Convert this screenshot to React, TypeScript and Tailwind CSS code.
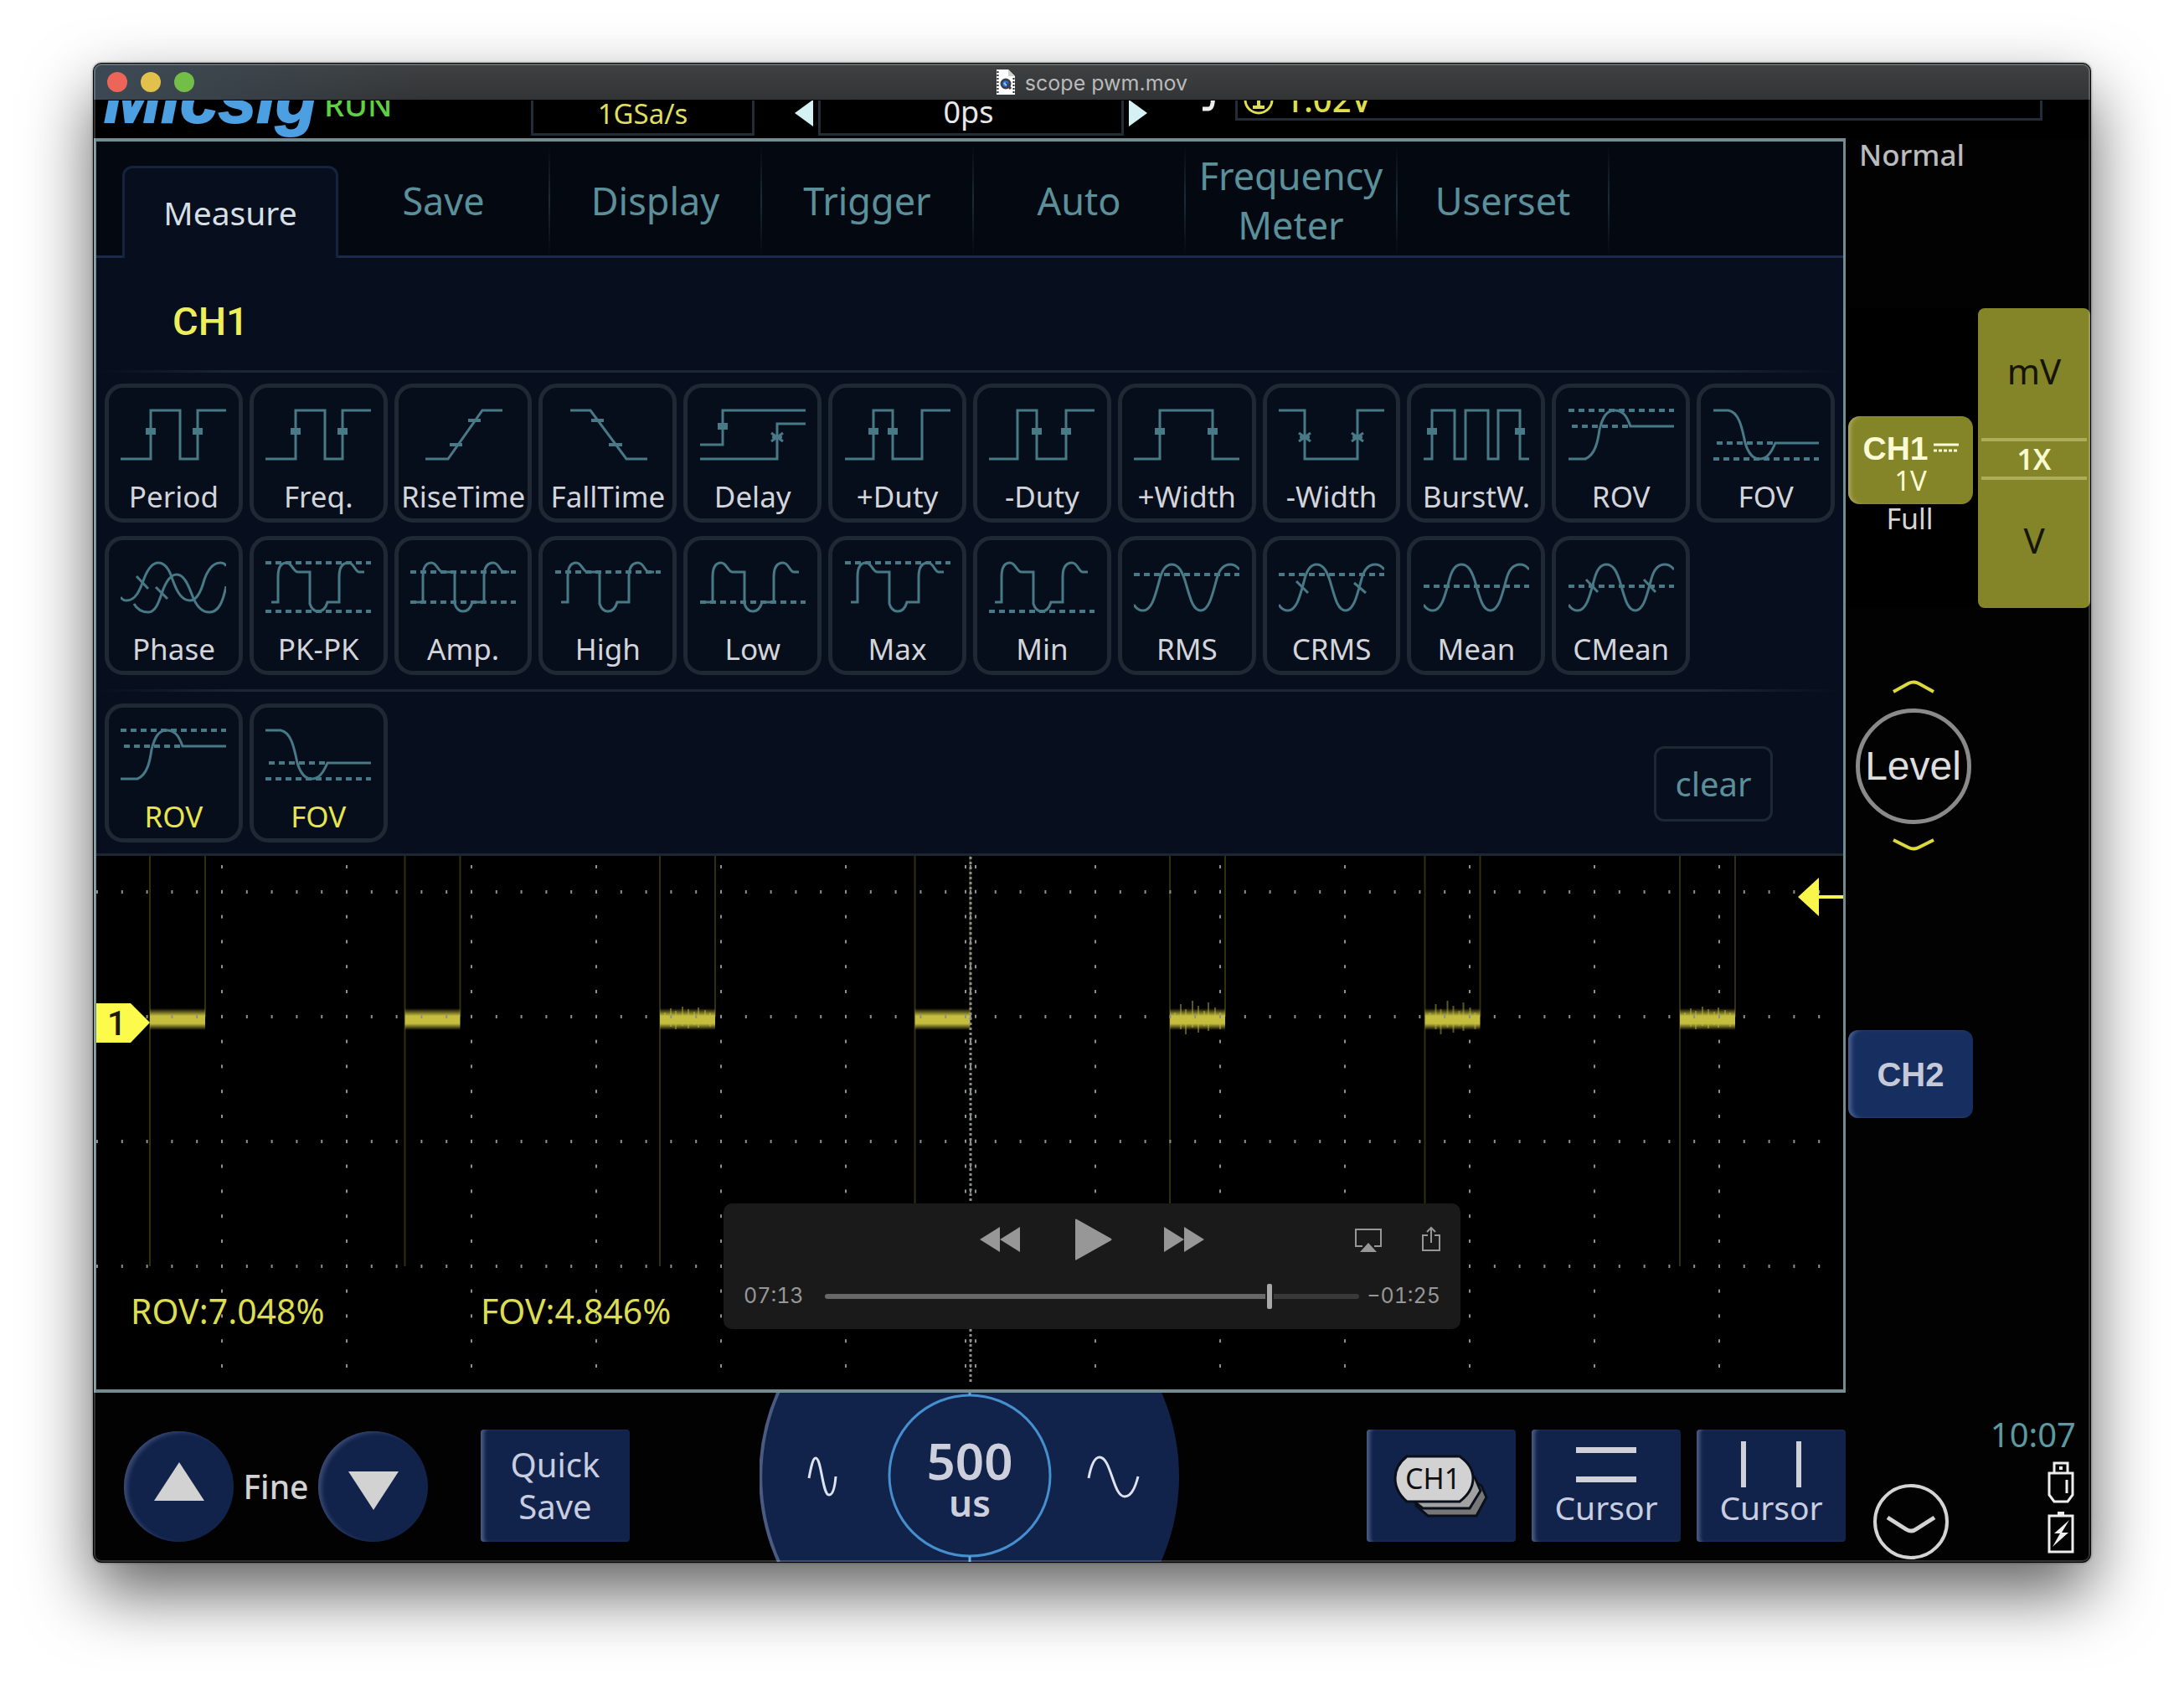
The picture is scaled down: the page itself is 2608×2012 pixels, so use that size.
import type { ReactNode } from "react";

const PULSE =
  "M7 50H15V20C15 8 19 3 25 3C32 3 33 14 39 14H53V52C55 58 58 61 63 61C68 61 72 57 74 50H88V20C88 8 92 3 99 3C106 3 107 14 112 14H118";
const SINE =
  "M0 53C3 58 7 60 11 60C22 60 26 40 31 22C34 11 38 5 45 5C53 5 57 12 61 24C67 44 70 60 80 60C90 60 94 40 99 22C102 11 107 5 115 5C120 5 123 7 126 11";

type Mark = [number, number];

function Plus({ at, cross }: { at: Mark[]; cross?: boolean }) {
  return (
    <>
      {at.map(([x, y]) => (
        <path
          key={x}
          strokeWidth={cross ? 3 : 8}
          d={
            cross
              ? `M${x - 7} ${y - 5}L${x + 7} ${y + 5}M${x - 7} ${y + 5}L${x + 7} ${y - 5}M${x - 6} ${y}H${x + 6}`
              : `M${x - 6} ${y}H${x + 6}`
          }
        />
      ))}
    </>
  );
}

function Dash({ y, from = 0, to = 126 }: { y: number; from?: number; to?: number }) {
  return <path strokeDasharray="7 5" strokeWidth="4" d={`M${from} ${y}H${to}`} />;
}

const ICONS: Record<string, ReactNode> = {
  Period: (
    <>
      <path d="M0 61H36V3H71V61H92V3H126" />
      <Plus at={[[36, 28], [92, 28]]} />
    </>
  ),
  RiseTime: (
    <>
      <path d="M18 61H45L86 3H110" />
      <path strokeWidth="4" d="M69 15H84M47 44H62" />
    </>
  ),
  FallTime: (
    <>
      <path d="M18 3H42L85 61H110" />
      <path strokeWidth="4" d="M43 15H58M64 44H80" />
    </>
  ),
  Delay: (
    <>
      <path d="M0 44H27V3H126M0 61H92V19H126" />
      <Plus at={[[27, 22]]} />
      <Plus cross at={[[92, 35]]} />
    </>
  ),
  "+Duty": (
    <>
      <path d="M0 61H34V3H57V61H92V3H126" />
      <Plus at={[[34, 28], [57, 28]]} />
    </>
  ),
  "-Duty": (
    <>
      <path d="M0 61H34V3H57V61H92V3H126" />
      <Plus at={[[57, 28], [92, 28]]} />
    </>
  ),
  "+Width": (
    <>
      <path d="M0 61H31V3H94V61H126" />
      <Plus at={[[31, 28], [94, 28]]} />
    </>
  ),
  "-Width": (
    <>
      <path d="M0 3H31V61H94V3H126" />
      <Plus cross at={[[31, 35], [94, 35]]} />
    </>
  ),
  "BurstW.": (
    <>
      <path d="M0 61H10V3H37V61H50V3H77V61H89V3H115V61H126" />
      <Plus at={[[10, 28], [115, 28]]} />
    </>
  ),
  ROV: (
    <>
      <Dash y={3} />
      <Dash y={22} from={4} to={74} />
      <path d="M0 61H20C32 56 35 40 37 26C41 10 46 3 55 3C64 3 69 8 74 22H126" />
    </>
  ),
  FOV: (
    <>
      <Dash y={42} from={4} to={74} />
      <Dash y={61} />
      <path d="M0 3H18C30 5 34 22 38 42C42 55 47 61 55 61C63 61 68 56 74 42H126" />
    </>
  ),
  Phase: (
    <>
      <path d="M0 44C2 47 4 48 7 48C18 48 23 36 28 22C33 9 38 3 45 3C53 3 58 10 62 23C68 40 74 48 83 48C91 48 96 38 100 23C105 9 112 3 119 3C122 3 125 4 126 7" />
      <path d="M16 52C20 59 26 62 33 62C41 62 45 52 49 40C54 25 60 17 67 17C76 17 81 30 86 43C91 56 98 62 106 62C117 62 122 50 126 31" />
      <path d="M19 19L33 34M42 32L56 46" />
    </>
  ),
  "PK-PK": (
    <>
      <Dash y={3} />
      <Dash y={61} />
      <path d={PULSE} />
    </>
  ),
  "Amp.": (
    <>
      <Dash y={14} />
      <Dash y={50} />
      <path d={PULSE} />
    </>
  ),
  High: (
    <>
      <Dash y={14} />
      <path d={PULSE} />
    </>
  ),
  Low: (
    <>
      <Dash y={50} />
      <path d={PULSE} />
    </>
  ),
  Max: (
    <>
      <Dash y={3} />
      <path d={PULSE} />
    </>
  ),
  Min: (
    <>
      <Dash y={61} />
      <path d={PULSE} />
    </>
  ),
  RMS: (
    <>
      <Dash y={17} />
      <path d={SINE} />
    </>
  ),
  CRMS: (
    <>
      <Dash y={17} />
      <path d={SINE} />
      <path d="M21 25L35 39M90 27L104 39" />
    </>
  ),
  Mean: (
    <>
      <Dash y={31} />
      <path d={SINE} />
    </>
  ),
  CMean: (
    <>
      <Dash y={31} />
      <path d={SINE} />
      <path d="M21 23L35 38M90 23L104 38" />
    </>
  ),
};
ICONS["Freq."] = ICONS.Period;

const MEASURES = [
  "Period", "Freq.", "RiseTime", "FallTime", "Delay", "+Duty", "-Duty", "+Width", "-Width", "BurstW.", "ROV", "FOV",
  "Phase", "PK-PK", "Amp.", "High", "Low", "Max", "Min", "RMS", "CRMS", "Mean", "CMean",
];

function MeasureButton({ name, active }: { name: string; active?: boolean }) {
  return (
    <button
      type="button"
      className="flex h-[166px] min-w-0 flex-col items-center rounded-[22px] border-[5px] border-[#1e2935] bg-[#060d1b] pt-6"
    >
      <svg viewBox="0 0 126 66" className="h-[66px] w-[126px] shrink-0" fill="none" stroke="#477a86" strokeWidth="3">
        {ICONS[name]}
      </svg>
      <span
        className={
          active
            ? "mt-4 text-[35px] leading-[48px] whitespace-nowrap text-[#e6e64e]"
            : "mt-4 text-[35px] leading-[48px] whitespace-nowrap text-[#d3d5da]"
        }
      >
        {name}
      </span>
    </button>
  );
}

const TABS = ["Save", "Display", "Trigger", "Auto", "Frequency Meter", "Userset"];

function Tabs() {
  return (
    <div role="tablist" className="flex h-[139px] bg-[#040811]">
      <div className="w-[31px] border-b-[3px] border-[#1a2a4c]" />
      <button
        type="button"
        role="tab"
        aria-selected="true"
        className="mt-[29px] w-[258px] rounded-t-[12px] border-[3px] border-b-0 border-[#16233f] bg-[#070e1d] text-[39px] text-[#d5dfe4]"
      >
        Measure
      </button>
      {TABS.map((t) => (
        <div key={t} className="flex w-[253px] border-b-[3px] border-[#1a2a4c] pt-1">
          <button type="button" role="tab" aria-selected="false" className="flex-1 text-[45px] leading-[59px] text-[#5b909a]">
            {t}
          </button>
          <div className="w-[2px] bg-linear-to-b from-transparent via-[#1d2b38] to-transparent" />
        </div>
      ))}
      <div className="flex-1 border-b-[3px] border-[#1a2a4c]" />
    </div>
  );
}

function Rule() {
  return <div className="h-[3px] bg-[linear-gradient(90deg,transparent,#1b2833_8%,#1b2833_92%,transparent)]" />;
}

const COLUMNS = Array.from({ length: 14 }, (_, i) => 1159 + (i - 6) * 149);
const STEPS_Y = Array.from({ length: 21 }, (_, i) => 1034 + i * 29.8);
const STEPS_X = Array.from({ length: 70 }, (_, i) => 116 + i * 29.8);
const PULSES = Array.from({ length: 7 }, (_, i) => 179 + i * 304.5);
const NOISE = [0, 0, 1, 0, 2, 2, 1];

function Scope() {
  return (
    <div className="relative bg-black">
      <svg viewBox="115 1021 2086 637" className="block h-[637px] w-full" preserveAspectRatio="none">
        <defs>
          <linearGradient id="trace" x1="0" x2="0" y1="0" y2="1">
            <stop offset="0" stopColor="#c9c242" stopOpacity="0" />
            <stop offset=".35" stopColor="#c4bd3e" />
            <stop offset=".7" stopColor="#c4bd3e" />
            <stop offset="1" stopColor="#c9c242" stopOpacity="0" />
          </linearGradient>
        </defs>
        {PULSES.map((x, i) => (
          <g key={x}>
            <path d={`M${x} 1021V1511M${x + 66} 1021V1213`} stroke="#312f0d" strokeWidth="2" />
            {NOISE[i] > 0 &&
              [6, 13, 19, 27, 34, 41, 46, 54, 60].map((d, k) => (
                <path
                  key={d}
                  d={`M${x + d} ${1208 - ((k * 5) % 8) * NOISE[i]}V${1222 + ((k * 3) % 7) * NOISE[i]}`}
                  stroke="#5a571c"
                  strokeWidth="2"
                />
              ))}
            <rect x={x} y="1203" width="66" height="26" fill="url(#trace)" />
          </g>
        ))}
        <g fill="#8b9090">
          {[1064, 1213, 1362, 1511].map((y) =>
            STEPS_X.map((x) => <rect key={`${x}-${y}`} x={x - 1} y={y - 2} width="2" height="4" />),
          )}
          {COLUMNS.map((x) => STEPS_Y.map((y) => <rect key={`${x}-${y}`} x={x - 1} y={y - 2} width="2" height="4" />))}
          {STEPS_Y.map((y) => (
            <path key={y} d={`M1152 ${y - 2}h2v4h-2zM1164 ${y - 2}h2v4h-2z`} />
          ))}
        </g>
        <path d="M1159 1022V1650" stroke="#8b9090" strokeWidth="3" strokeDasharray="3 3" />
        <path d="M115 1197H156L179 1220L156 1244H115Z" fill="#fcfb4c" />
        <text x="128" y="1235" fontSize="40" fontWeight="500" fontFamily="Roboto" fill="#1c1c08">
          1
        </text>
        <path d="M2147 1070L2172 1047V1068H2201V1072H2172V1093Z" fill="#f8f64a" />
      </svg>
      <output className="absolute bottom-[66px] left-[41px] text-[41px] leading-[56px] text-[#dcde52]">ROV:7.048%</output>
      <output className="absolute bottom-[66px] left-[459px] text-[41px] leading-[56px] text-[#dcde52]">FOV:4.846%</output>
    </div>
  );
}

function TopStrip() {
  return (
    <div className="flex h-[45px] items-end overflow-hidden bg-black pr-[57px] pl-3">
      <div className="w-[263px] pb-[7px] text-[82px] leading-[80px] font-bold text-[#4c9fe0] italic [-webkit-text-stroke:2px_#4c9fe0] [font-family:'Liberation_Sans',sans-serif]">
        Micsig
      </div>
      <div className="w-[247px] pb-3.5 text-[38px] leading-[54px] font-medium text-[#5fd043]">RUN</div>
      <div className="mb-[3px] h-[60px] w-[267px] border-[3px] border-[#222d38] pt-1.5 text-center text-[33px] leading-[50px] text-[#dede60]">
        1GSa/s
      </div>
      <button type="button" aria-label="Shift left" className="mb-[14px] ml-12 w-[22px]">
        <svg viewBox="0 0 22 32" className="h-8 w-[22px] fill-[#d5f1f4]">
          <path d="M0 16L22 0V32Z" />
        </svg>
      </button>
      <div className="mb-[3px] ml-1.5 h-[60px] w-[365px] border-[3px] border-[#222d38] pt-1 pr-1.5 text-center text-[36px] leading-[50px] text-[#e8e8e8]">
        0ps
      </div>
      <button type="button" aria-label="Shift right" className="mb-[14px] ml-1.5 w-[22px]">
        <svg viewBox="0 0 22 32" className="h-8 w-[22px] fill-[#d5f1f4]">
          <path d="M22 16L0 0V32Z" />
        </svg>
      </button>
      <svg viewBox="0 0 32 40" className="mb-8 ml-[64px] h-10 w-8" fill="none" stroke="#eee" strokeWidth="5">
        <path d="M2 37H9Q13 37 14 30L17 3H30" />
      </svg>
      <div className="mb-[21px] ml-[9px] flex h-[60px] flex-1 items-end border-[3px] border-[#222d38] pb-[3px] pl-1.5 text-[#dede4e]">
        <svg viewBox="0 0 38 38" className="h-[38px] w-[38px]" fill="none" stroke="#dede4e" strokeWidth="3">
          <circle cx="19" cy="19" r="16" />
          <path d="M13 14L19 10V27M12 28H26" strokeWidth="4" />
        </svg>
        <span className="ml-3 text-[40px] leading-[38px] font-medium">1.02V</span>
      </div>
    </div>
  );
}

const KEY = "relative h-[134px] w-[178px] rounded-[4px] bg-[#11234b] shadow-[inset_6px_0_4px_-2px_#4a5a80] text-[#c9cde0]";

function BottomBar() {
  return (
    <div className="flex h-[202px] bg-[#020202]">
      <div className="flex flex-1 items-end pb-6">
        <button
          type="button"
          aria-label="Fine up"
          className="ml-9 flex h-[132px] w-[131px] items-center justify-center rounded-full bg-[#11234b] shadow-[inset_5px_2px_5px_-1px_#3a4a72]"
        >
          <svg viewBox="0 0 60 60" className="h-[60px] w-[60px] fill-[#d2d2d2]">
            <path d="M30 1L60 47H0Z" />
          </svg>
        </button>
        <span className="w-[101px] pb-8 text-center text-[39px] leading-[68px] font-medium text-[#d2d2d2]">Fine</span>
        <button
          type="button"
          aria-label="Fine down"
          className="flex h-[132px] w-[131px] items-center justify-center rounded-full bg-[#11234b] shadow-[inset_5px_2px_5px_-1px_#3a4a72]"
        >
          <svg viewBox="0 0 60 60" className="h-[60px] w-[60px] fill-[#d2d2d2]">
            <path d="M30 58L0 12H60Z" />
          </svg>
        </button>
        <button type="button" className={KEY + " ml-[63px] text-[40px] leading-[50px]"}>
          Quick
          <br />
          Save
        </button>
      </div>
      <div className="relative flex w-[502px] items-center justify-center overflow-hidden">
        <svg viewBox="0 0 502 202" className="absolute inset-0 h-full w-full" fill="none">
          <circle cx="251" cy="100" r="250" fill="#11234b" />
          <path d="M23 -2A250 250 0 0 0 23 202" stroke="#4a5a80" strokeWidth="4" />
          <circle cx="251" cy="99" r="96" stroke="#458fce" strokeWidth="3" />
          <path d="M251 0V3M251 195V202" stroke="#59a8e4" strokeWidth="3" />
          <path d="M59 102C62 86 64 78 67 78C74 78 75 122 83 122C88 122 90 112 91 100" stroke="#dfe3f0" strokeWidth="3" />
          <path d="M393 102C396 86 400 77 406 77C420 77 422 124 436 124C444 124 449 112 452 100" stroke="#dfe3f0" strokeWidth="3" />
        </svg>
        <button type="button" className="relative text-center font-semibold text-[#cdd0dc]">
          <span className="block text-[60px] leading-[60px]">500</span>
          <span className="block text-[44px] leading-[40px]">us</span>
        </button>
      </div>
      <div className="flex flex-1 items-end justify-end gap-[19px] pb-6">
        <button type="button" className={KEY + " flex items-center justify-center"}>
          <svg viewBox="0 0 120 80" className="h-20 w-[120px]" strokeWidth="3" stroke="#0a0f1c">
            <path d="M36 32H94L108 40L114 54L102 76H44L30 64Z" fill="#777" />
            <path d="M28 22H88L100 30L107 46L94 67H38L24 56Z" fill="#a2a2a2" />
            <path d="M19 5H82Q98 16 98 31Q98 47 82 59H19Q5 47 5 31Q5 16 19 5Z" fill="#d2d2d2" />
            <text x="17" y="44" fontSize="34" fontFamily="Noto Sans" stroke="none" fill="#101010">
              CH1
            </text>
          </svg>
        </button>
        <button type="button" className={KEY + " flex flex-col items-center pt-5 text-[39px] leading-[34px]"}>
          <svg viewBox="0 0 72 56" className="h-14 w-[72px]" fill="#cfd0d8">
            <path d="M0 1H72V8H0ZM0 36H72V43H0Z" />
          </svg>
          Cursor
        </button>
        <button type="button" className={KEY + " flex flex-col items-center pt-5 text-[39px] leading-[34px]"}>
          <svg viewBox="0 0 72 56" className="h-14 w-[72px] overflow-visible" fill="#cfd0d8">
            <path d="M0 -6H6V49H0ZM66 -6H72V49H66Z" />
          </svg>
          Cursor
        </button>
      </div>
    </div>
  );
}

function SideBar() {
  return (
    <aside className="flex w-[292px] shrink-0 flex-col bg-[#020202]">
      <div className="h-[203px] pl-4 text-[35px] leading-[40px] font-medium text-[#b9bbbd]">Normal</div>
      <div className="flex h-[358px] bg-black">
        <div className="w-[158px] pt-[129px] pl-[3px]">
          <button
            type="button"
            className="flex h-[105px] w-[149px] flex-col items-center rounded-[14px] bg-[#848428] pt-4 text-[#fafbd4] shadow-[inset_5px_0_5px_-2px_#a9a95c]"
          >
            <span className="flex items-start gap-1.5">
              <span className="text-[39px] leading-[46px] font-bold [font-family:'Liberation_Sans',sans-serif]">CH1</span>
              <svg viewBox="0 0 30 14" className="mt-4 h-3.5 w-[30px]" stroke="#fafbd4" strokeWidth="3">
                <path d="M0 2H30" />
                <path d="M0 9H30" strokeDasharray="4 2" />
              </svg>
            </span>
            <span className="text-[33px] leading-[30px]">1V</span>
          </button>
          <div className="w-[147px] text-center text-[34px] leading-[34px] text-[#d4d4d4]">Full</div>
        </div>
        <div className="flex flex-1 flex-col items-stretch rounded-[8px] bg-[#848428] px-1 text-center text-[#15150a]">
          <button type="button" className="h-[155px] pb-1.5 text-[42px]">
            mV
          </button>
          <button
            type="button"
            className="h-[50px] border-y-4 border-[#aeae58] text-[34px] leading-[40px] font-semibold text-[#f8f9cc]"
          >
            1X
          </button>
          <button type="button" className="h-[148px] pb-1.5 text-[42px]">
            V
          </button>
        </div>
      </div>
      <div className="flex h-[504px] w-[161px] flex-col items-center pt-[86px]">
        <svg viewBox="0 0 50 16" className="h-4 w-[50px]" fill="none" stroke="#dcd83e" strokeWidth="4">
          <path d="M1 14L19 4Q25 1 31 4L49 14" />
        </svg>
        <button
          type="button"
          className="mt-[18px] h-[138px] w-[138px] rounded-full border-[5px] border-[#8a8a8a] text-[48px] text-[#dedede] [font-family:'Liberation_Sans',sans-serif]"
        >
          Level
        </button>
        <svg viewBox="0 0 50 16" className="mt-[17px] h-4 w-[50px]" fill="none" stroke="#dcd83e" strokeWidth="4">
          <path d="M1 2L19 11Q25 14 31 11L49 2" />
        </svg>
      </div>
      <button
        type="button"
        className="ml-[3px] h-[105px] w-[149px] rounded-[12px] bg-[#172f60] text-[40px] font-bold text-[#c6cad8] shadow-[inset_6px_0_5px_-2px_#4b6090] [font-family:'Liberation_Sans',sans-serif]"
      >
        CH2
      </button>
      <div className="mt-auto flex items-end justify-between pr-[17px] pb-0.5 pl-8">
        <button type="button" aria-label="Collapse">
          <svg viewBox="0 0 92 92" className="block h-[92px] w-[92px]" fill="none" stroke="#d4d4d4" strokeWidth="4">
            <circle cx="46" cy="46" r="43" />
            <path d="M18 41L40 55Q46 59 52 55L74 41" strokeWidth="5" />
          </svg>
        </button>
        <div className="flex flex-col items-end pb-2">
          <time className="text-[40px] leading-[56px] text-[#5a9aa0]">10:07</time>
          <svg viewBox="0 0 32 50" className="mt-1 mr-0.5 h-[50px] w-8" fill="none" stroke="#eee" strokeWidth="3">
            <path d="M8 13V2H24V13M2 14H30V40L24 48H8L2 40ZM23 22V38" />
            <path d="M14 8H18" strokeWidth="4" />
          </svg>
          <svg viewBox="0 0 32 50" className="mt-2.5 mr-0.5 h-[50px] w-8" fill="none" stroke="#eee" strokeWidth="3">
            <path d="M2 5H30V48H2Z" />
            <path d="M12 2H20" strokeWidth="4" />
            <path d="M26 10L8 26H15L6 42L25 25H17Z" fill="#eee" stroke="none" />
          </svg>
        </div>
      </div>
    </aside>
  );
}

function Player() {
  return (
    <div className="absolute bottom-[278px] left-1/2 flex h-[150px] w-[880px] -translate-x-1/2 flex-col rounded-[10px] bg-[#1a1a1a] px-6 text-[#979797] [font-family:Inter,sans-serif]">
      <div className="grid h-[86px] grid-cols-3 items-center">
        <div />
        <div className="flex justify-center gap-[62px]">
          <button type="button" aria-label="Rewind">
            <svg viewBox="0 0 48 50" className="block h-[50px] w-12 fill-current">
              <path d="M0 25L24 10V40ZM24 25L48 10V40Z" />
            </svg>
          </button>
          <button type="button" aria-label="Play">
            <svg viewBox="0 0 48 50" className="block h-[50px] w-12 fill-current">
              <path d="M4 1Q4 0 6 1L47 24Q48 25 47 26L6 49Q4 50 4 49Z" />
            </svg>
          </button>
          <button type="button" aria-label="Fast forward">
            <svg viewBox="0 0 48 50" className="block h-[50px] w-12 fill-current">
              <path d="M24 25L0 10V40ZM48 25L24 10V40Z" />
            </svg>
          </button>
        </div>
        <div className="flex justify-end gap-12">
          <button type="button" aria-label="AirPlay">
            <svg viewBox="0 0 32 32" className="block h-8 w-8" fill="none" stroke="currentColor" strokeWidth="2">
              <path d="M9 24H1V4H31V24H23" />
              <path d="M16 20L26 31H6Z" fill="currentColor" stroke="none" />
            </svg>
          </button>
          <button type="button" aria-label="Share">
            <svg viewBox="0 0 22 32" className="block h-8 w-[22px]" fill="none" stroke="currentColor" strokeWidth="2">
              <path d="M7 11H1V29H21V11H15M11 20V2M6 7L11 2L16 7" />
            </svg>
          </button>
        </div>
      </div>
      <div className="mt-[10px] flex h-[30px] items-center text-[25px] tabular-nums">
        <label htmlFor="seek" className="w-[97px]">
          07:13
        </label>
        <input
          id="seek"
          type="range"
          min={0}
          max={518}
          defaultValue={433}
          className="h-[30px] min-w-0 flex-1 appearance-none bg-transparent [&::-webkit-slider-runnable-track]:h-[6px] [&::-webkit-slider-runnable-track]:rounded-full [&::-webkit-slider-runnable-track]:bg-[linear-gradient(90deg,#686868_82.4%,#1a1a1a_82.4%,#1a1a1a_84%,#393939_84%)] [&::-webkit-slider-thumb]:mt-[-12px] [&::-webkit-slider-thumb]:h-[30px] [&::-webkit-slider-thumb]:w-[6px] [&::-webkit-slider-thumb]:appearance-none [&::-webkit-slider-thumb]:rounded-[2px] [&::-webkit-slider-thumb]:bg-[#a8a8a8]"
        />
        <span className="w-[97px] text-right">−01:25</span>
      </div>
    </div>
  );
}

function TitleBar() {
  return (
    <header className="relative flex h-11 items-center justify-center border-b border-black bg-linear-to-b from-[#3f4142] to-[#323435]">
      <div className="absolute inset-y-0 left-0 w-[400px] bg-linear-to-r from-[#3c4954] to-transparent" />
      <div className="absolute left-4 flex gap-4">
        <button type="button" aria-label="Close" className="h-6 w-6 rounded-full bg-[#ed6559]" />
        <button type="button" aria-label="Minimize" className="h-6 w-6 rounded-full bg-[#e1c04c]" />
        <button type="button" aria-label="Zoom" className="h-6 w-6 rounded-full bg-[#72be47]" />
      </div>
      <svg viewBox="0 0 22 30" className="mr-3 h-[30px] w-[22px]">
        <path d="M0 0H14L22 8V30H0Z" fill="#fff" />
        <path d="M14 0L22 8H14Z" fill="#cfcfcf" />
        <path d="M1.500 2V30M20.500 10V30" stroke="#222" strokeWidth="2" strokeDasharray="2 2" />
        <circle cx="11" cy="17" r="5" fill="#2f7bf0" stroke="#3a3f4a" strokeWidth="3" />
        <path d="M11 16L17 23" stroke="#3a3f4a" strokeWidth="3" />
        <path d="M9 16L12 19" stroke="#7fd0ff" strokeWidth="2" />
      </svg>
      <h1 className="pt-0.5 text-[25px] leading-[30px] text-[#b9baba] [font-family:Inter,sans-serif]">scope pwm.mov</h1>
    </header>
  );
}

export default function App() {
  return (
    <div className="min-h-screen bg-white px-[111px] pt-[75px] pb-[146px] [font-family:'Noto_Sans',sans-serif]">
      <div className="rounded-[10px] shadow-[0_0_3px_rgba(0,0,0,0.5),0_36px_80px_rgba(0,0,0,0.62)]">
        <div className="relative overflow-hidden rounded-[10px] border border-black bg-black">
          <TitleBar />
          <TopStrip />
          <div className="flex">
            <main className="min-w-0 flex-1">
              <section className="border-x-[3px] border-y-4 border-[#718d92] bg-[#070e1d]">
                <Tabs />
                <h2 className="h-[134px] pt-[46px] pl-[91px] text-[47px] leading-[60px] font-medium text-[#eeee5a] [font-family:Roboto,sans-serif]">
                  CH1
                </h2>
                <Rule />
                <div className="grid grid-cols-12 gap-x-2 gap-y-4 px-2.5 pt-[13px] pb-[17px]">
                  {MEASURES.map((m) => (
                    <MeasureButton key={m} name={m} />
                  ))}
                </div>
                <Rule />
                <div className="grid grid-cols-12 gap-x-2 border-b-[3px] border-[#1b2833] px-2.5 pt-[14px] pb-[13px]">
                  <MeasureButton name="ROV" active />
                  <MeasureButton name="FOV" active />
                  <div className="col-span-10 flex items-center justify-end pt-[25px] pr-[74px]">
                    <button
                      type="button"
                      className="h-[90px] w-[142px] rounded-[12px] border-[3px] border-[#1c2935] text-[40px] leading-[60px] text-[#5b909a]"
                    >
                      clear
                    </button>
                  </div>
                </div>
                <Scope />
              </section>
              <BottomBar />
            </main>
            <SideBar />
          </div>
          <Player />
          <div className="pointer-events-none absolute inset-0 rounded-[9px] shadow-[inset_0_0_0_2px_rgba(255,255,255,0.2)]" />
        </div>
      </div>
    </div>
  );
}
